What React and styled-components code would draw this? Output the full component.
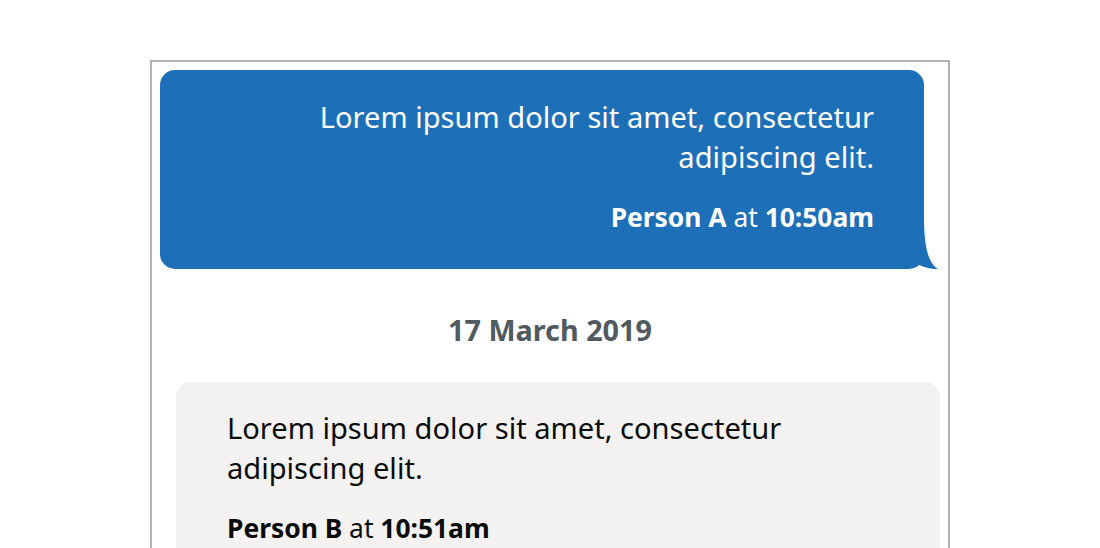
import React from "react";
import styled, { createGlobalStyle } from "styled-components";

const Global = createGlobalStyle`
  html, body { margin: 0; padding: 0; background: #ffffff; }
  body { font-family: "Noto Sans", "Liberation Sans", Arial, sans-serif; color: #0b0c0c; }
`;

const Frame = styled.div`
  width: 800px;
  box-sizing: border-box;
  margin: 60px auto 0;
  border: 2px solid #b1b4b6;
  padding: 8px;
  display: flex;
  flex-direction: column;
`;

const Bubble = styled.div`
  position: relative;
  width: calc(100% - 16px);
  box-sizing: border-box;
  align-self: ${(p) => (p.$sent ? "flex-start" : "flex-end")};
  background: ${(p) => (p.$sent ? "#1d70b8" : "#f3f2f1")};
  color: ${(p) => (p.$sent ? "#ffffff" : "#0b0c0c")};
  text-align: ${(p) => (p.$sent ? "right" : "left")};
  border-radius: 15px;
  padding: ${(p) => (p.$sent ? "27px 50px 32px 50px" : "26px 50px 32px 51px")};
`;

const Text = styled.p`
  margin: 0;
  font-size: 29.1px;
  line-height: 40px;
  font-weight: 400;
`;

const Meta = styled.p`
  margin: 20px 0 0;
  font-size: 26.4px;
  line-height: 40px;
  font-weight: 400;
  b { font-weight: 700; }
`;

const Tail = styled.svg`
  position: absolute;
  right: -14px;
  bottom: 0;
  width: 28px;
  height: 53px;
`;

const DateLabel = styled.h3`
  margin: 41px 0 32px;
  text-align: center;
  font-size: 28.8px;
  line-height: 40px;
  font-weight: 700;
  color: #505a5f;
`;

export default function App() {
  return (
    <>
      <Global />
      <Frame>
        <Bubble $sent>
          <Text>Lorem ipsum dolor sit amet, consectetur adipiscing elit.</Text>
          <Meta>
            <b>Person A</b> at <b>10:50am</b>
          </Meta>
          <Tail viewBox="0 0 28 53">
            <path d="M14 0 C14 30 18 47 28 53 C20 53 12 51 6 47 L2 35 Z" fill="#1d70b8" />
          </Tail>
        </Bubble>
        <DateLabel>17 March 2019</DateLabel>
        <Bubble>
          <Text>Lorem ipsum dolor sit amet, consectetur adipiscing elit.</Text>
          <Meta>
            <b>Person B</b> at <b>10:51am</b>
          </Meta>
        </Bubble>
      </Frame>
    </>
  );
}
